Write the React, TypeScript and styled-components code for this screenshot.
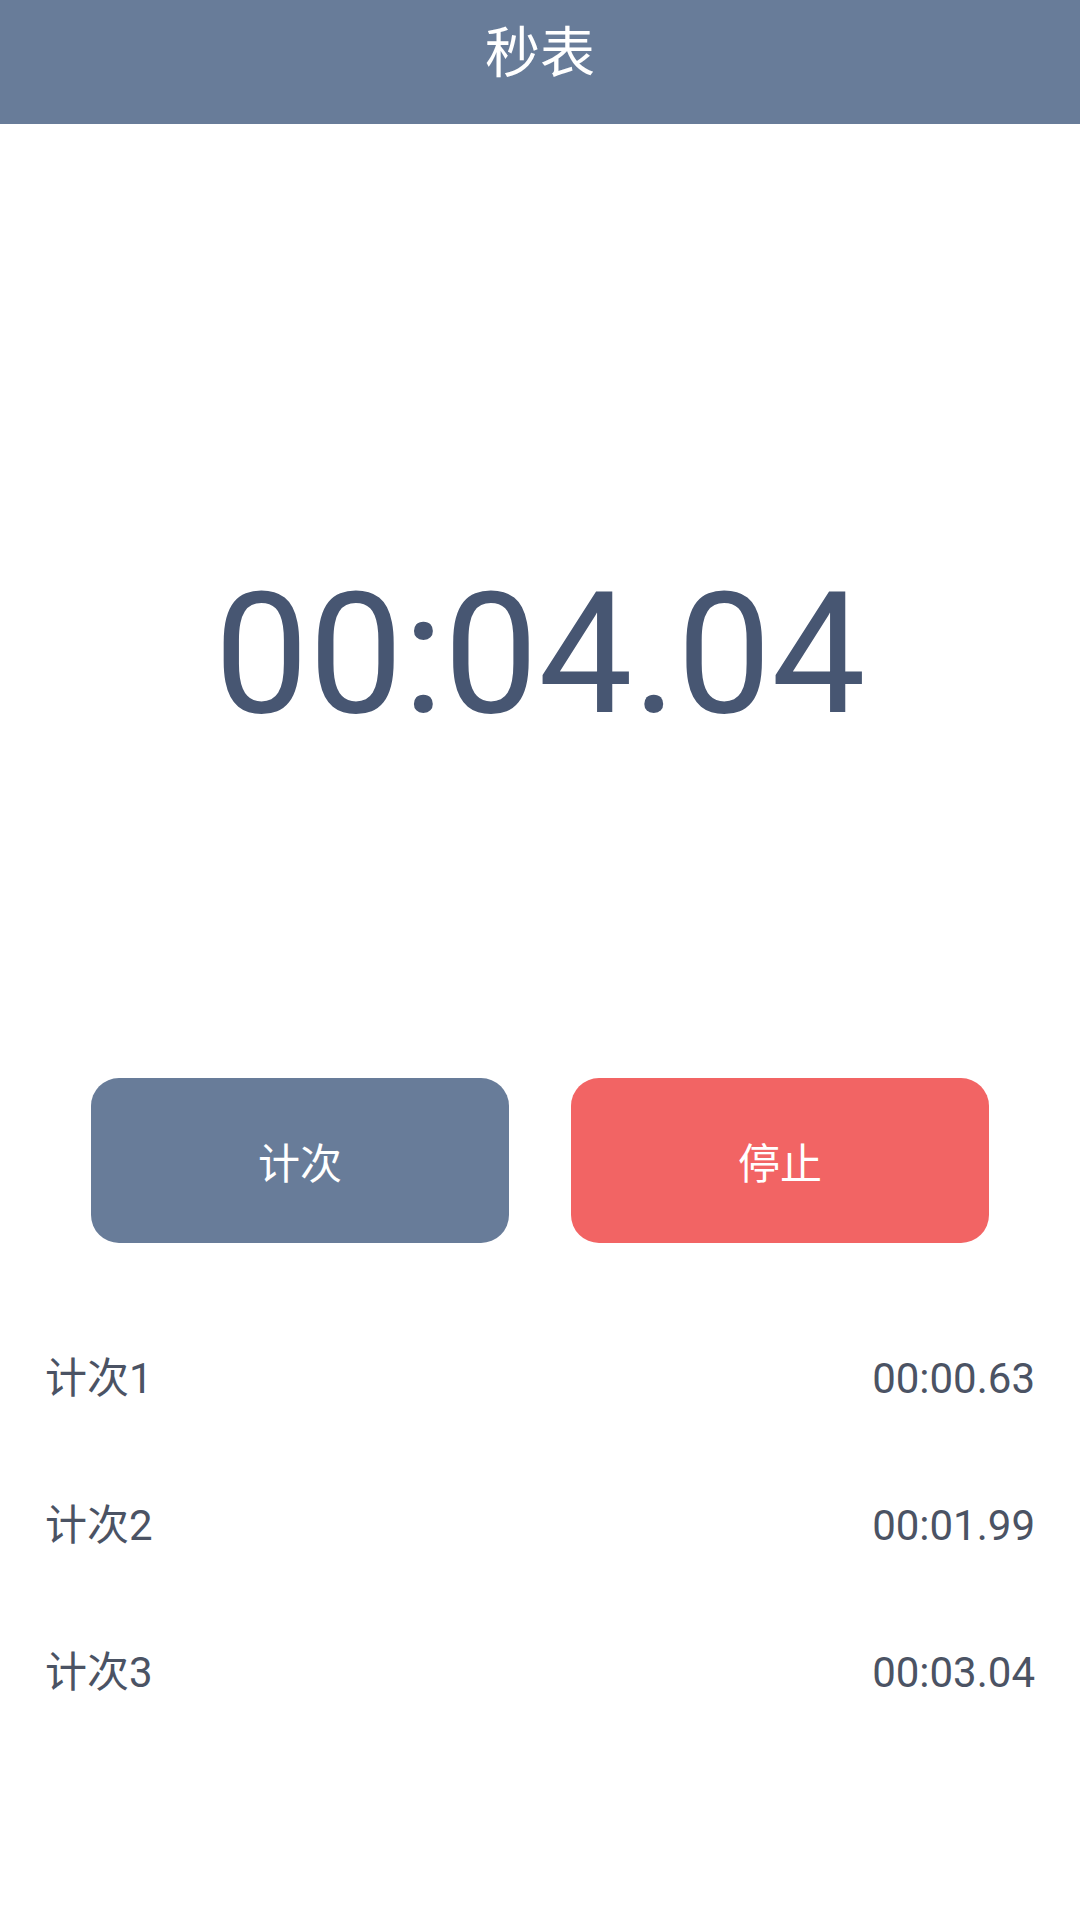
import React from 'react';
import styled, { createGlobalStyle } from 'styled-components';

const laps = [
  { name: '计次1', time: '00:00.63' },
  { name: '计次2', time: '00:01.99' },
  { name: '计次3', time: '00:03.04' },
];

const App = () => {
  return (
    <Page>
      <GlobalStyle />
      <Header>
        <Title>秒表</Title>
      </Header>
      <TimeArea>
        <Clock>00:04.04</Clock>
      </TimeArea>
      <ButtonRow>
        <ActionButton tone='slate'>计次</ActionButton>
        <ActionButton tone='red'>停止</ActionButton>
      </ButtonRow>
      <LapList>
        {laps.map((lap) => (
          <LapRow key={lap.name}>
            <span>{lap.name}</span>
            <span>{lap.time}</span>
          </LapRow>
        ))}
      </LapList>
    </Page>
  );
};

const GlobalStyle = createGlobalStyle`
  html, body {
    margin: 0;
    padding: 0;
    background: #ffffff;
  }
  body {
    font-family: Roboto, 'Noto Sans CJK SC', sans-serif;
  }
  * {
    box-sizing: border-box;
  }
`;

const Page = styled.div`
  width: 1080px;
  min-height: 1920px;
  background: #ffffff;
  display: flex;
  flex-direction: column;
`;

const Header = styled.header`
  height: 124px;
  background: #687c99;
  display: flex;
  justify-content: center;
  align-items: center;
  padding-bottom: 18px;
`;

const Title = styled.h1`
  margin: 0;
  font-size: 55px;
  font-weight: 400;
  color: #ffffff;
  line-height: 1;
`;

const TimeArea = styled.section`
  height: 954px;
  padding-top: 108px;
  display: flex;
  justify-content: center;
  align-items: center;
`;

const Clock = styled.div`
  font-size: 168px;
  font-weight: 400;
  line-height: 1;
  color: #475672;
`;

const ButtonRow = styled.div`
  display: grid;
  grid-template-columns: 1fr 1fr;
  column-gap: 62px;
  padding: 0 91px;
`;

const ActionButton = styled.button<{ tone: 'slate' | 'red' }>`
  height: 165px;
  border: none;
  border-radius: 28px;
  background: ${({ tone }) => (tone === 'red' ? '#f26464' : '#687c99')};
  color: #ffffff;
  font-family: inherit;
  font-size: 42px;
  display: flex;
  justify-content: center;
  align-items: center;
  cursor: pointer;
`;

const LapList = styled.ul`
  list-style: none;
  margin: 62px 0 0;
  padding: 0 45px 0 45px;
`;

const LapRow = styled.li`
  height: 147px;
  display: flex;
  justify-content: space-between;
  align-items: baseline;
  font-size: 42px;
  line-height: 147px;
  color: #4b5364;
`;

export default App;
